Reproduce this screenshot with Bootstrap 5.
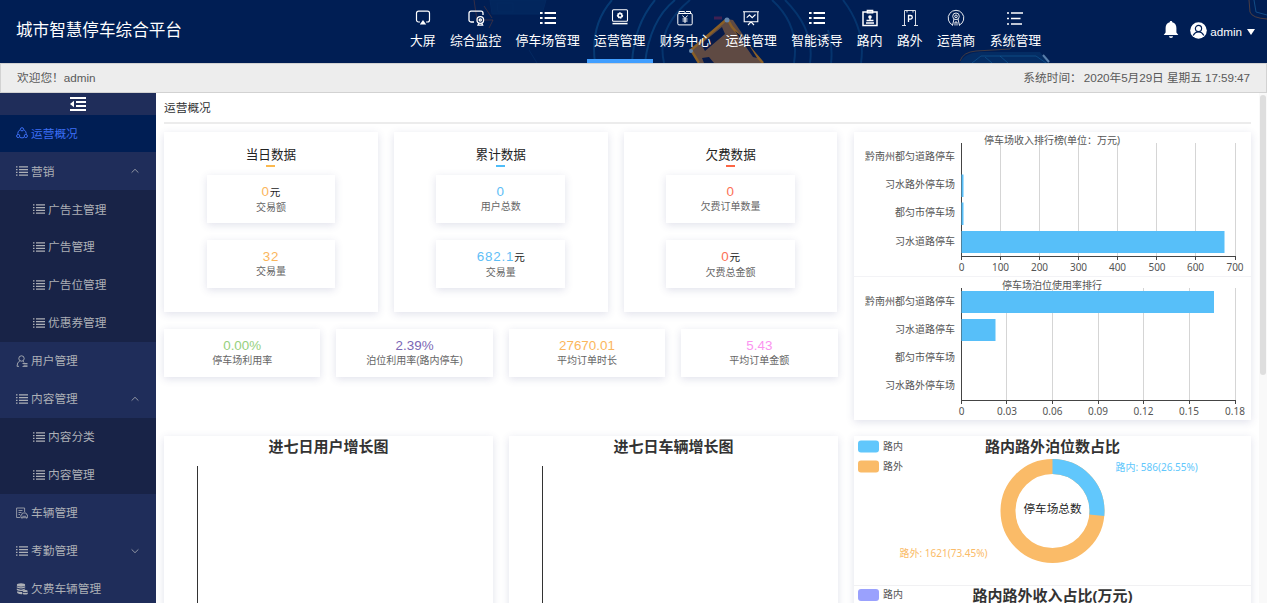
<!DOCTYPE html>
<html lang="zh-CN">
<head>
<meta charset="utf-8">
<title>城市智慧停车综合平台</title>
<link rel="stylesheet" href="https://cdn.jsdelivr.net/npm/bootstrap@5.3.0/dist/css/bootstrap.min.css">
<style>
body{font-family:"Liberation Sans","Noto Sans CJK SC",sans-serif;font-size:11.7px;line-height:1.5;color:#303133;height:603px}
svg{display:block;flex:none}
.topbar{height:63px;background:#001e54;color:#fff}
.topbar-art{position:absolute;left:0;top:0}
.brand-name{font-size:16.6px;padding-left:16px;width:402.7px}
.nav-entry{font-size:12.84px;padding:9px 7.2px 0;height:63px;line-height:20px;color:#fff;white-space:nowrap;border-bottom:4px solid transparent}
.nav-entry svg{margin-bottom:4px}
.nav-entry.active{border-bottom-color:#409eff}
.user-box{margin-left:auto;padding-right:12px;height:60px}
.user-name{margin:4px 5px 0 3px}
.welcome{height:30px;background:#ededed;border:1px solid #d2d2d2;color:#5a5a5a;padding:0 16px}
.side{width:155.5px;background:#1f2d5a;color:#adb0b6;flex:none}
.fold{height:21.5px;color:#fff}
.side-item{height:37.93px;padding-left:16px;gap:3px;white-space:nowrap}
.side-item.active{background:#001e54;color:#3c6ff5}
.side-item .arrow{margin-left:auto;margin-right:17px}
.sub{background:#182347}
.sub .side-item{padding-left:33px}
.main-area{padding:0 8px 0 8.5px;min-width:0}
.page-title{height:31px;border-bottom:2px solid #ececec;padding-top:6px}
.panel{background:#fff;box-shadow:0 2px 8px rgba(60,70,130,.16)}
.cols{gap:16px;padding-top:8px}
.left-col{width:673.5px;flex:none}
.right-col{width:397.5px;flex:none}
.big{height:180px;padding-top:13px}
.big-title{font-size:12.6px;line-height:20px;color:#222}
.dash{width:9px;height:2px;margin:0 0 8px}
.mini{width:128.5px;height:48px;margin-bottom:16.5px;padding-top:8px}
.num{font-size:13.4px;line-height:17px}
.mini .num{letter-spacing:.8px}
.unit{font-size:10.6px;color:#222;letter-spacing:0}
.cap{font-size:10px;line-height:14px;color:#666}
.rates{margin:16.5px 0 59px}
.rate{height:48.5px;padding-top:8.4px}
.c-orange{color:#fbb65c}.c-blue{color:#5ebef6}.c-red{color:#fc7055}.c-green{color:#96d07c}.c-purple{color:#7b67b5}.c-pink{color:#fb95f0}
.b-orange{background:#fbb94f}.b-blue{background:#4fbdf8}.b-red{background:#fc6645}
.rank-panel{margin-bottom:16px}
.chart{font-family:"Noto Sans","Noto Sans CJK SC",sans-serif;font-size:10px}
.chart text{fill:#555}
.chart .heading{font-size:15px;font-weight:700;fill:#333}
.chart .ring-label{font-size:11.6px;fill:#222}
.chart .t-in{fill:#61c7fc}
.chart .t-out{fill:#fabb68}
.track{width:8px;background:#f9f9f9;margin-left:auto;padding:2px 1px}
.thumb{height:280px;border-radius:3px;background:#dedede}
</style>
<script src="https://cdn.jsdelivr.net/npm/bootstrap@5.3.0/dist/js/bootstrap.bundle.min.js"></script>
</head>
<body class="d-flex flex-column overflow-hidden">
<svg width="0" height="0" class="position-absolute"><defs>
<symbol id="list" viewBox="0 0 16 16"><path d="M0 2.5h2M4 2.5h12M0 6.2h2M4 6.2h12M0 9.8h2M4 9.8h12M0 13.5h2M4 13.5h12" stroke="currentColor" stroke-width="1.6"/></symbol>
<symbol id="list3" viewBox="0 0 16 16"><path d="M0 3h2.6M4.6 3H16M0 8h2.6M4.6 8H16M0 13h2.6M4.6 13H16" stroke="currentColor" stroke-width="2.2"/></symbol>
<symbol id="up" viewBox="0 0 8 8"><path d="M.6 5.6L4 2.3l3.4 3.3" fill="none" stroke="currentColor" stroke-width=".8"/></symbol>
<symbol id="down" viewBox="0 0 8 8"><path d="M.6 2.4L4 5.7l3.4-3.3" fill="none" stroke="currentColor" stroke-width=".8"/></symbol>
</defs></svg>

<header class="topbar d-flex position-relative flex-shrink-0">
  <svg class="topbar-art" width="1267" height="63" fill="none">
    <g stroke="#0a4a86" stroke-width="2" opacity=".65">
      <path d="M595 63Q590 25 612 0M632 63Q634 25 655 0M645 63Q650 20 675 0" />
      <path d="M664 63Q656 28 690 0M772 0Q800 25 794 63M785 0Q815 30 810 63M843 0Q866 30 861 63M828 30Q833 48 831 63" opacity=".8"/>
    </g>
    <path d="M474 0L477 20 493 20 489 28M484 6L492 18" stroke="#6b4038" opacity=".5"/>
    <path d="M490 0h56l-4 14h-50zM497 3h16v9h-15zM529 50l8 13" fill="#06356e" stroke="#0b3d78" opacity=".35"/>
    <path d="M960 63q4-10 20-11h60l9 11" fill="#06356e" opacity=".6"/>
    <path d="M960 61q3-9 16-10l34-2 5-7" stroke="#6e4c35" opacity=".6"/>
    <path d="M972 63l9-7h55l10 7M985 57l7 6M1000 56l8 7" stroke="#1667a5" opacity=".5"/>
    <path d="M1043 55l6 7" stroke="#7ea6cf" stroke-width="2" opacity=".7"/>
    <path d="M1249 0l1 12q2 6 17 7" stroke="#805437" opacity=".6"/><path d="M1254 0l2 12 11 3" stroke="#175894" opacity=".8"/>
    <path d="M727 19L691 50l9 13h62l-29-43z" fill="#5f4a43"/>
    <path d="M727 19L691 50l8 13M728 20l4 7 31 36" stroke="#8a5f26" stroke-width="2.5"/>
    <path d="M722 27l-21 17 4 7 20-17zM735 31l11 9 11 18-4-1zM702 58l7-1 5 6h-10z" fill="#071b4b"/>
    <path d="M714 18h8" stroke="#9d2350" stroke-width="3" opacity=".4"/><circle cx="727" cy="20" r="2.5" fill="#6587ad"/><circle cx="691" cy="51" r="2" fill="#6587ad"/>
  </svg>
  <div class="brand-name d-flex align-items-center position-relative flex-shrink-0">城市智慧停车综合平台</div>
  <nav class="d-flex position-relative">
    <a class="nav-entry d-flex flex-column align-items-center text-decoration-none"><svg width="18" height="18" viewBox="0 0 18 18" fill="none" stroke="#fff" stroke-width="1.2"><path d="M6 13H4.500A2 2 0 0 1 2.500 11V4.200a2 2 0 0 1 2-2h9a2 2 0 0 1 2 2V11a2 2 0 0 1-2 2H12"/><path d="M9 11l3.200 4.500H5.800z" fill="#fff" stroke="none"/></svg>大屏</a>
    <a class="nav-entry d-flex flex-column align-items-center text-decoration-none"><svg width="18" height="18" viewBox="0 0 18 18" fill="none" stroke="#fff" stroke-width="1.300"><path d="M7 13H4a2 2 0 0 1-2-2V4.200a2 2 0 0 1 2-2h10a2 2 0 0 1 2 2V6"/><circle cx="13.300" cy="11" r="3.300"/><circle cx="13.300" cy="11" r="1.100"/><path d="M12 14l-1 2.200h4.600l-1-2.200"/></svg>综合监控</a>
    <a class="nav-entry d-flex flex-column align-items-center text-decoration-none"><svg width="16" height="18" viewBox="0 -1 16 18"><use href="#list3" width="16" height="16"/></svg>停车场管理</a>
    <a class="nav-entry active d-flex flex-column align-items-center text-decoration-none"><svg width="18" height="18" viewBox="0 0 18 18" fill="none" stroke="#fff" stroke-width="1.100"><rect x="1.500" y=".7" width="15" height="11.600" rx="1"/><circle cx="9" cy="6.500" r="2.200" stroke-width="1.900" stroke-dasharray="1.300 .430"/><circle cx="9" cy="6.500" r="1.900"/><path d="M1.500 14.600h15" stroke-width="1.500"/></svg>运营管理</a>
    <a class="nav-entry d-flex flex-column align-items-center text-decoration-none"><svg width="18" height="18" viewBox="0 0 18 18" fill="none" stroke="#fff"><path d="M3 4.500V2.500h5.500l1 2M3 4.500h12a1.200 1.200 0 0 1 1.200 1.200v9A1.200 1.200 0 0 1 15 15.900H3a1.200 1.200 0 0 1-1.200-1.200v-9A1.200 1.200 0 0 1 3 4.500zM6.500 6.500L9 9.500l2.500-3M9 9.500v4.500M6.500 10h5M6.500 12h5M10 2.500h4.500v2"/></svg>财务中心</a>
    <a class="nav-entry d-flex flex-column align-items-center text-decoration-none"><svg width="18" height="18" viewBox="0 0 18 18" fill="none" stroke="#fff" stroke-width="1.100"><path d="M1 2.700h16M2.200 2.700v10h13.600v-10M4.700 8.700L7.500 6l2.700 2.700L13.500 5.500M6 16l3-3.200L12 16"/></svg>运维管理</a>
    <a class="nav-entry d-flex flex-column align-items-center text-decoration-none"><svg width="16" height="18" viewBox="0 -1 16 18"><use href="#list3" width="16" height="16"/></svg>智能诱导</a>
    <a class="nav-entry d-flex flex-column align-items-center text-decoration-none"><svg width="18" height="18" viewBox="0 0 18 18" fill="none" stroke="#fff" stroke-width="1.500"><rect x="2" y="3" width="14" height="13.500"/><path d="M6.300 3.800V1.500h5.400v2.300z" stroke-width="1.300"/><circle cx="9" cy="8" r="1.800" fill="#fff" stroke="none"/><path d="M9 9v3M5.500 11.500h7M5 14h8" stroke-width="1.300"/></svg>路内</a>
    <a class="nav-entry d-flex flex-column align-items-center text-decoration-none"><svg width="18" height="18" viewBox="0 0 18 18" fill="none" stroke="#fff"><g opacity=".85"><path d="M1 16.500h4M3.500 16.500V1.500h11v15M13 16.500h4M6 1.500v2M12 1.500v2"/></g><path d="M7.500 13V6.500h2a1.800 1.800 0 0 1 0 3.600h-2" stroke-width="1.300"/></svg>路外</a>
    <a class="nav-entry d-flex flex-column align-items-center text-decoration-none"><svg width="18" height="18" viewBox="0 0 18 18" fill="none" stroke="#fff" stroke-width=".9"><path d="M6 16.300A7.800 7.800 0 1 1 12 16.300"/><circle cx="9" cy="7.300" r="3.300"/><circle cx="9" cy="7.300" r="1.300"/><path d="M7 10l-1.500 6.500M11 10l1.500 6.500M8 16.500V13h2v3.500"/></svg>运营商</a>
    <a class="nav-entry d-flex flex-column align-items-center text-decoration-none"><svg width="18" height="18" viewBox="0 0 18 18" stroke="#fff" stroke-width="1.300"><path d="M1 4h2M5 4h12M1 9.500h2M5 9.500h9.500M1 15h2M5 15h11"/></svg>系统管理</a>
  </nav>
  <div class="user-box d-flex align-items-center position-relative">
    <svg width="16" height="18" viewBox="0 0 16 18" fill="#fff"><path d="M8 0c.8 0 1.300.5 1.300 1.300C12 2 13.400 4 13.400 7v4.500l1.900 2.500H.7l1.900-2.500V7C2.600 4 4 2 6.700 1.300 6.700.5 7.200 0 8 0zM6 15.300h4c0 1.100-.9 1.700-2 1.700s-2-.6-2-1.700z"/></svg>
    <svg width="17" height="17" viewBox="0 0 17 17" style="margin-left:11px"><circle cx="8.500" cy="8.500" r="8.300" fill="#fff"/><g fill="none" stroke="#001e54" stroke-width="1.200"><circle cx="8.500" cy="6.500" r="3.100"/><path d="M3.200 13.500Q5 9.800 8.500 9.800T13.800 13.500"/></g></svg>
    <span class="user-name">admin</span>
    <svg width="8" height="6" class="mt-1"><path d="M0 0h8L4 6z" fill="#fff"/></svg>
  </div>
</header>

<div class="welcome d-flex justify-content-between align-items-center flex-shrink-0"><span>欢迎您！admin</span><span class="d-flex"><span style="margin-right:2px">系统时间：</span><span style="letter-spacing:-.06px">2020年5月29日 星期五 17:59:47</span></span></div>

<div class="d-flex flex-grow-1 overflow-hidden">
  <aside class="side">
    <div class="fold d-flex justify-content-center align-items-center"><svg width="16" height="14" viewBox="0 0 16 14"><path d="M0 1h16M6 5h10M6 9h10M0 13h16" stroke="#fff" stroke-width="1.900"/><path d="M0 7l4-3.200v6.400z" fill="#fff"/></svg></div>
    <div class="side-item active d-flex align-items-center"><svg width="12" height="12" viewBox="0 0 12 12" fill="none" stroke="currentColor"><circle cx="6" cy="2.300" r="1.600"/><circle cx="2.200" cy="9" r="1.600"/><circle cx="9.800" cy="9" r="1.600"/><path d="M4 2.800Q1.800 4 1.700 6.800M8 2.800q2.200 1.200 2.300 4M4 10.500q2 .8 4 0"/></svg>运营概况</div>
    <div class="side-item d-flex align-items-center"><svg width="12" height="12"><use href="#list"/></svg>营销<svg class="arrow" width="8" height="8"><use href="#up"/></svg></div>
    <div class="sub">
      <div class="side-item d-flex align-items-center"><svg width="12" height="12"><use href="#list"/></svg>广告主管理</div>
      <div class="side-item d-flex align-items-center"><svg width="12" height="12"><use href="#list"/></svg>广告管理</div>
      <div class="side-item d-flex align-items-center"><svg width="12" height="12"><use href="#list"/></svg>广告位管理</div>
      <div class="side-item d-flex align-items-center"><svg width="12" height="12"><use href="#list"/></svg>优惠券管理</div>
    </div>
    <div class="side-item d-flex align-items-center"><svg width="12" height="12" viewBox="0 0 12 12" fill="none" stroke="currentColor" stroke-width=".9"><circle cx="5.500" cy="3.500" r="2.700"/><path d="M3.800 5.800Q1 7.500 1 11.300h2M7 6l1 1.500M6.500 8.500h5M7.500 10.200h4M6.500 11.600h5"/></svg>用户管理</div>
    <div class="side-item d-flex align-items-center"><svg width="12" height="12"><use href="#list"/></svg>内容管理<svg class="arrow" width="8" height="8"><use href="#up"/></svg></div>
    <div class="sub">
      <div class="side-item d-flex align-items-center"><svg width="12" height="12"><use href="#list"/></svg>内容分类</div>
      <div class="side-item d-flex align-items-center"><svg width="12" height="12"><use href="#list"/></svg>内容管理</div>
    </div>
    <div class="side-item d-flex align-items-center"><svg width="12" height="12" viewBox="0 0 12 12" fill="none" stroke="currentColor" stroke-width=".8"><path d="M4 10.500H.6V1h8v4M2.500 3.500h4M2.500 5.500h3M2.500 7.500h1.500M5.500 8l1-2h3.500l1 2h.6v2.700H4.900V8zM6 11.500v-1M10.500 11.500v-1M6.300 9.300h4"/></svg>车辆管理</div>
    <div class="side-item d-flex align-items-center"><svg width="12" height="12"><use href="#list"/></svg>考勤管理<svg class="arrow" width="8" height="8"><use href="#down"/></svg></div>
    <div class="side-item d-flex align-items-center"><svg width="12" height="12" viewBox="0 0 12 12" fill="currentColor"><ellipse cx="5" cy="2" rx="4.200" ry="1.700"/><path d="M.8 3.200q4.200 2.200 8.400 0v1.300q-4.200 2.200-8.400 0zM.8 5.600q4.200 2.200 8.400 0v.6l-2.700 1.700q-3.500.4-5.700-.9zM1.200 8.200q2.300 1 4.800.8v2.300q-3 0-4.800-1.300z"/><ellipse cx="9.200" cy="8.200" rx="2.600" ry="1.100"/><path d="M6.600 9.400q2.600 1.400 5.200 0v1.500q-2.600 1.400-5.200 0z"/></svg>欠费车辆管理</div>
  </aside>

  <main class="main-area">
    <div class="page-title">运营概况</div>
    <div class="cols d-flex">
      <div class="left-col">
        <div class="d-flex gap-3">
          <section class="panel big d-flex flex-column align-items-center w-100">
            <div class="big-title">当日数据</div><div class="dash b-orange"></div>
            <div class="panel mini text-center"><div class="num c-orange">0<span class="unit">元</span></div><div class="cap">交易额</div></div>
            <div class="panel mini text-center"><div class="num c-orange">32</div><div class="cap">交易量</div></div>
          </section>
          <section class="panel big d-flex flex-column align-items-center w-100">
            <div class="big-title">累计数据</div><div class="dash b-blue"></div>
            <div class="panel mini text-center"><div class="num c-blue">0</div><div class="cap">用户总数</div></div>
            <div class="panel mini text-center"><div class="num c-blue">682.1<span class="unit">元</span></div><div class="cap">交易量</div></div>
          </section>
          <section class="panel big d-flex flex-column align-items-center w-100">
            <div class="big-title">欠费数据</div><div class="dash b-red"></div>
            <div class="panel mini text-center"><div class="num c-red">0</div><div class="cap">欠费订单数量</div></div>
            <div class="panel mini text-center"><div class="num c-red">0<span class="unit">元</span></div><div class="cap">欠费总金额</div></div>
          </section>
        </div>
        <div class="rates d-flex gap-3 text-center">
          <div class="panel rate w-100"><div class="num c-green">0.00%</div><div class="cap">停车场利用率</div></div>
          <div class="panel rate w-100"><div class="num c-purple">2.39%</div><div class="cap">泊位利用率(路内停车)</div></div>
          <div class="panel rate w-100"><div class="num c-orange">27670.01</div><div class="cap">平均订单时长</div></div>
          <div class="panel rate w-100"><div class="num c-pink">5.43</div><div class="cap">平均订单金额</div></div>
        </div>
        <div class="d-flex gap-3">
          <section class="panel w-100"><svg class="chart" width="328.500" height="180" viewBox="164 436 328.500 180"><text class="heading" x="328.500" y="452" text-anchor="middle">进七日用户增长图</text><path d="M197.500 466v150" stroke="#333"/></svg></section>
          <section class="panel w-100"><svg class="chart" width="328.500" height="180" viewBox="509 436 328.500 180"><text class="heading" x="673.500" y="452" text-anchor="middle">进七日车辆增长图</text><path d="M542.500 466v150" stroke="#333"/></svg></section>
        </div>
      </div>

      <div class="right-col">
        <section class="panel rank-panel">
          <svg class="chart" width="397.500" height="144" viewBox="854 132 397.500 144">
            <path d="M1000.500 143v113M1039.500 143v113M1078.500 143v113M1117.500 143v113M1156.500 143v113M1195.500 143v113M1235.500 143v113" stroke="#d5d5d5"/>
            <path d="M961.500 143v117M961 256.500h274.500M1000.500 256v4M1039.500 256v4M1078.500 256v4M1117.500 256v4M1156.500 256v4M1195.500 256v4M1235.500 256v4" stroke="#444" fill="none"/>
            <path d="M961.500 174.500h2V197h-2zM961.500 202.500h2V225h-2zM961.500 231h263v22h-263z" fill="#57bff9"/>
            <text x="1052" y="144" text-anchor="middle">停车场收入排行榜(单位：万元)</text>
            <g text-anchor="end"><text x="955" y="160">黔南州都匀道路停车</text><text x="955" y="188">习水路外停车场</text><text x="955" y="216">都匀市停车场</text><text x="955" y="244.500">习水道路停车</text></g>
            <g text-anchor="middle"><text x="961.500" y="270.500">0</text><text x="1000.500" y="270.500">100</text><text x="1039.500" y="270.500">200</text><text x="1078.500" y="270.500">300</text><text x="1117.500" y="270.500">400</text><text x="1157" y="270.500">500</text><text x="1195.500" y="270.500">600</text><text x="1235" y="270.500">700</text></g>
          </svg>
          <svg class="chart" width="397.500" height="144" viewBox="854 276 397.500 144">
            <path d="M854 276.500h398" stroke="#f3f3f6"/>
            <path d="M1006.500 288v112M1052.500 288v112M1098.500 288v112M1143.500 288v112M1189.500 288v112M1235.500 288v112" stroke="#d5d5d5"/>
            <path d="M961.500 288v116M961 400.500h274.500M1006.500 400v4M1052.500 400v4M1098.500 400v4M1143.500 400v4M1189.500 400v4M1235.500 400v4" stroke="#444" fill="none"/>
            <path d="M961.500 291h252.500v22h-252.500zM961.500 319h34v22h-34z" fill="#57bff9"/>
            <text x="1052" y="288.500" text-anchor="middle">停车场泊位使用率排行</text>
            <g text-anchor="end"><text x="955" y="304.500">黔南州都匀道路停车</text><text x="955" y="332.500">习水道路停车</text><text x="955" y="360.500">都匀市停车场</text><text x="955" y="388.500">习水路外停车场</text></g>
            <g text-anchor="middle"><text x="961.500" y="414.500">0</text><text x="1007" y="414.500">0.03</text><text x="1052.500" y="414.500">0.06</text><text x="1098" y="414.500">0.09</text><text x="1143.500" y="414.500">0.12</text><text x="1189" y="414.500">0.15</text><text x="1235" y="414.500">0.18</text></g>
          </svg>
        </section>
        <section class="panel">
          <svg class="chart" width="397.500" height="180" viewBox="854 436 397.500 180">
            <rect x="858" y="440.500" width="21" height="12" rx="3" fill="#61c7fc"/><text x="883" y="449.500">路内</text>
            <rect x="858" y="460.500" width="21" height="12" rx="3" fill="#fabb68"/><text x="883" y="469.500">路外</text>
            <text class="heading" x="1052.500" y="452" text-anchor="middle">路内路外泊位数占比</text>
            <circle cx="1052.500" cy="511" r="44.500" fill="none" stroke="#fabb68" stroke-width="15"/>
            <circle cx="1052.500" cy="511" r="44.500" fill="none" stroke="#61c7fc" stroke-width="15" pathLength="100" stroke-dasharray="26.550 73.450" transform="rotate(-90 1052.500 511)"/>
            <text class="ring-label" x="1052.500" y="512.500" text-anchor="middle">停车场总数</text>
            <text class="t-in" x="1115.500" y="470.500">路内: 586(26.55%)</text>
            <text class="t-out" x="899.500" y="556.500">路外: 1621(73.45%)</text>
            <path d="M854 585.500h398" stroke="#f1f1f3"/>
            <rect x="858" y="589" width="21" height="12" rx="3" fill="#9aa1fd"/><text x="883" y="598">路内</text>
            <text class="heading" x="1052.500" y="600.500" text-anchor="middle">路内路外收入占比(万元)</text>
          </svg>
        </section>
      </div>
    </div>
  </main>
  <div class="track"><div class="thumb"></div></div>
</div>
</body>
</html>
